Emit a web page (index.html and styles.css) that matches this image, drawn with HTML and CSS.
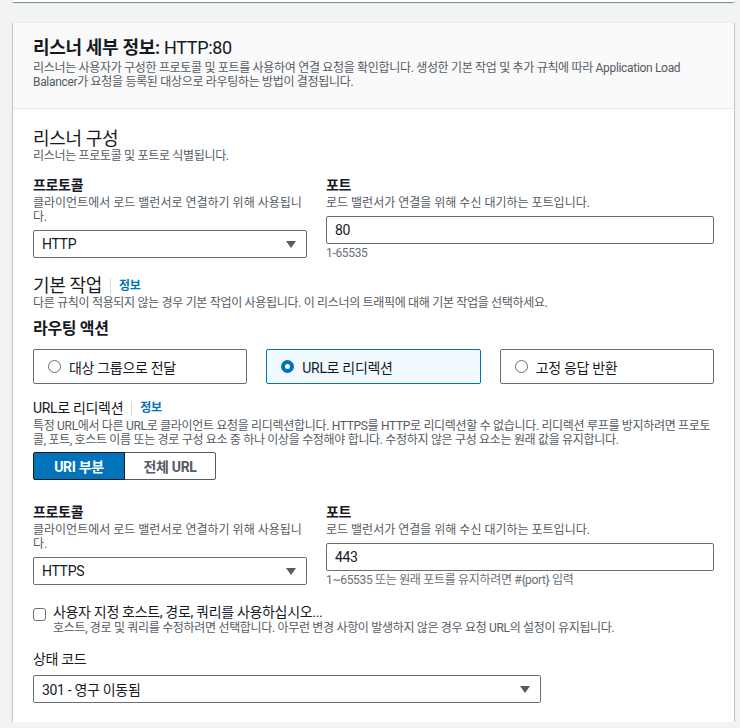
FILE: index.html
```html
<!DOCTYPE html>
<html lang="ko">
<head>
<meta charset="utf-8">
<title>리스너 세부 정보</title>
<link rel="stylesheet" href="styles.css">
</head>
<body>
<div class="prev"></div>
<section class="card">
  <header class="card-head">
    <h2 class="card-title"><b>리스너 세부 정보:</b> HTTP:80</h2>
    <p class="head-desc">리스너는 사용자가 구성한 프로토콜 및 포트를 사용하여 연결 요청을 확인합니다. 생성한 기본 작업 및 추가 규칙에 따라 Application Load Balancer가 요청을 등록된 대상으로 라우팅하는 방법이 결정됩니다.</p>
  </header>
  <div class="card-body">
    <h3 class="sec-title">리스너 구성</h3>
    <p class="desc">리스너는 프로토콜 및 포트로 식별됩니다.</p>

    <div class="pair">
      <div class="field">
        <div class="label">프로토콜</div>
        <div class="desc fdesc">클라이언트에서 로드 밸런서로 연결하기 위해 사용됩니다.</div>
        <div class="select">HTTP<span class="caret"></span></div>
      </div>
      <div class="field">
        <div class="label">포트</div>
        <div class="desc fdesc">로드 밸런서가 연결을 위해 수신 대기하는 포트입니다.</div>
        <div class="input">80</div>
        <div class="hint">1-65535</div>
      </div>
    </div>

    <div class="heading-row sec-gap">
      <h3 class="sec-title">기본 작업</h3>
      <span class="info">정보</span>
    </div>
    <p class="desc desc-tight">다른 규칙이 적용되지 않는 경우 기본 작업이 사용됩니다. 이 리스너의 트래픽에 대해 기본 작업을 선택하세요.</p>

    <div class="sub-title">라우팅 액션</div>
    <div class="tiles">
      <div class="tile"><span class="radio"></span>대상 그룹으로 전달</div>
      <div class="tile on"><span class="radio"></span>URL로 리디렉션</div>
      <div class="tile"><span class="radio"></span>고정 응답 반환</div>
    </div>

    <div class="heading-row redir-row">
      <span class="redir-title">URL로 리디렉션</span>
      <span class="info">정보</span>
    </div>
    <p class="desc redir-desc">특정 URL에서 다른 URL로 클라이언트 요청을 리디렉션합니다. HTTPS를 HTTP로 리디렉션할 수 없습니다. 리디렉션 루프를 방지하려면 프로토콜, 포트, 호스트 이름 또는 경로 구성 요소 중 하나 이상을 수정해야 합니다. 수정하지 않은 구성 요소는 원래 값을 유지합니다.</p>

    <div class="seg">
      <div class="seg-btn on">URI 부분</div>
      <div class="seg-btn">전체 URL</div>
    </div>

    <div class="pair pair2">
      <div class="field">
        <div class="label">프로토콜</div>
        <div class="desc fdesc">클라이언트에서 로드 밸런서로 연결하기 위해 사용됩니다.</div>
        <div class="select">HTTPS<span class="caret"></span></div>
      </div>
      <div class="field">
        <div class="label">포트</div>
        <div class="desc fdesc">로드 밸런서가 연결을 위해 수신 대기하는 포트입니다.</div>
        <div class="input">443</div>
        <div class="hint">1~65535 또는 원래 포트를 유지하려면 #{port} 입력</div>
      </div>
    </div>

    <div class="check-row">
      <span class="checkbox"></span>
      <div class="check-text">
        <div class="check-label">사용자 지정 호스트, 경로, 쿼리를 사용하십시오...</div>
        <div class="desc desc-tight">호스트, 경로 및 쿼리를 수정하려면 선택합니다. 아무런 변경 사항이 발생하지 않은 경우 요청 URL의 설정이 유지됩니다.</div>
      </div>
    </div>

    <div class="status-label">상태 코드</div>
    <div class="select status-select">301 - 영구 이동됨<span class="caret"></span></div>
  </div>
</section>
</body>
</html>
```

FILE: styles.css
```css
* { box-sizing: border-box; }

body {
  margin: 0;
  background: #f2f3f3;
  font-family: Roboto, "Noto Sans CJK KR", sans-serif;
  color: #16191f;
  letter-spacing: -0.02em;
}

.prev {
  height: 2px;
  margin: 0 6px 0 13px;
  background: #fff;
  box-shadow: 0 1px 1px 0 rgba(0, 28, 36, 0.3), 1px 1px 1px 0 rgba(0, 28, 36, 0.15), -1px 1px 1px 0 rgba(0, 28, 36, 0.15);
}

.card {
  margin: 20px 6px 0 13px;
  background: #fff;
  border-top: 1px solid #eaeded;
  box-shadow: 0 1px 1px 0 rgba(0, 28, 36, 0.3), 1px 1px 1px 0 rgba(0, 28, 36, 0.15), -1px 1px 1px 0 rgba(0, 28, 36, 0.15);
}

.card-head {
  background: #fafafa;
  border-bottom: 1px solid #eaeded;
  padding: 14px 20px 19px;
}

.card-title {
  margin: 0;
  font-size: 18px;
  line-height: 22px;
  font-weight: 400;
}

.card-title b { font-weight: 700; }

.head-desc {
  margin: 2px 0 0;
  font-size: 12px;
  line-height: 14px;
  color: #545b64;
}

.card-body {
  padding: 20px 20px 19px;
}

.sec-title {
  margin: 0;
  font-size: 18px;
  line-height: 20px;
  font-weight: 400;
}

.desc {
  margin: 0;
  font-size: 12px;
  line-height: 14px;
  color: #545b64;
}

.desc-tight { margin-top: 0; }

.pair {
  display: grid;
  grid-template-columns: 274px 1fr;
  column-gap: 19px;
  margin-top: 14px;
}

.label {
  font-size: 14px;
  line-height: 16px;
  font-weight: 700;
}

.fdesc {
  margin-top: 3px;
  letter-spacing: 0;
}

.select,
.input {
  margin-top: 6px;
  height: 28px;
  border: 1px solid #687078;
  border-radius: 2px;
  background: #fff;
  font-size: 14px;
  display: flex;
  align-items: center;
  padding: 0 8px;
}

.select {
  justify-content: space-between;
  padding-right: 10px;
}

.caret {
  width: 0;
  height: 0;
  border-left: 5px solid transparent;
  border-right: 5px solid transparent;
  border-top: 7px solid #545b64;
}

.hint {
  margin-top: 2px;
  font-size: 12px;
  line-height: 14px;
  color: #687078;
}

.heading-row {
  display: flex;
  align-items: center;
}

.sec-gap { margin-top: 16px; }

.info {
  margin-left: 8px;
  padding-left: 8px;
  border-left: 1px solid #d5dbdb;
  font-size: 12px;
  line-height: 15px;
  font-weight: 700;
  color: #0073bb;
}

.sub-title {
  margin-top: 9px;
  font-size: 16px;
  line-height: 20px;
  font-weight: 700;
}

.tiles {
  display: grid;
  grid-template-columns: repeat(3, 1fr);
  column-gap: 19px;
  margin-top: 10px;
}

.tile {
  height: 35px;
  border: 1px solid #687078;
  border-radius: 2px;
  display: flex;
  align-items: center;
  gap: 8px;
  padding: 0 14px;
  font-size: 14px;
}

.tile.on {
  border-color: #0073bb;
  background: #f1faff;
}

.radio {
  width: 13px;
  height: 13px;
  border-radius: 50%;
  border: 1px solid #687078;
  background: #fff;
  flex: none;
}

.tile.on .radio {
  border: 4px solid #0073bb;
}

.redir-row { margin-top: 15px; }

.redir-title {
  font-size: 14px;
  line-height: 18px;
}

.redir-desc { margin-top: 2px; }

.seg {
  display: flex;
  margin-top: 5px;
}

.seg-btn {
  width: 92px;
  height: 28px;
  border: 1px solid #545b64;
  display: flex;
  align-items: center;
  justify-content: center;
  font-size: 14px;
  font-weight: 700;
  color: #545b64;
  background: #fff;
}

.seg-btn + .seg-btn { margin-left: -1px; border-radius: 0 2px 2px 0; }

.seg-btn.on {
  background: #0073bb;
  border-color: #16191f;
  color: #fff;
  border-radius: 2px 0 0 2px;
  position: relative;
  z-index: 1;
}

.pair2 { margin-top: 24px; }

.check-row {
  display: flex;
  gap: 7px;
  margin-top: 16px;
}

.checkbox {
  width: 13px;
  height: 13px;
  margin-top: 5px;
  border: 1px solid #687078;
  border-radius: 3px;
  background: #fff;
  flex: none;
}

.check-label {
  font-size: 14px;
  line-height: 18px;
}

.status-label {
  margin-top: 14px;
  font-size: 14px;
  line-height: 20px;
}

.status-select { width: 508px; }
```
